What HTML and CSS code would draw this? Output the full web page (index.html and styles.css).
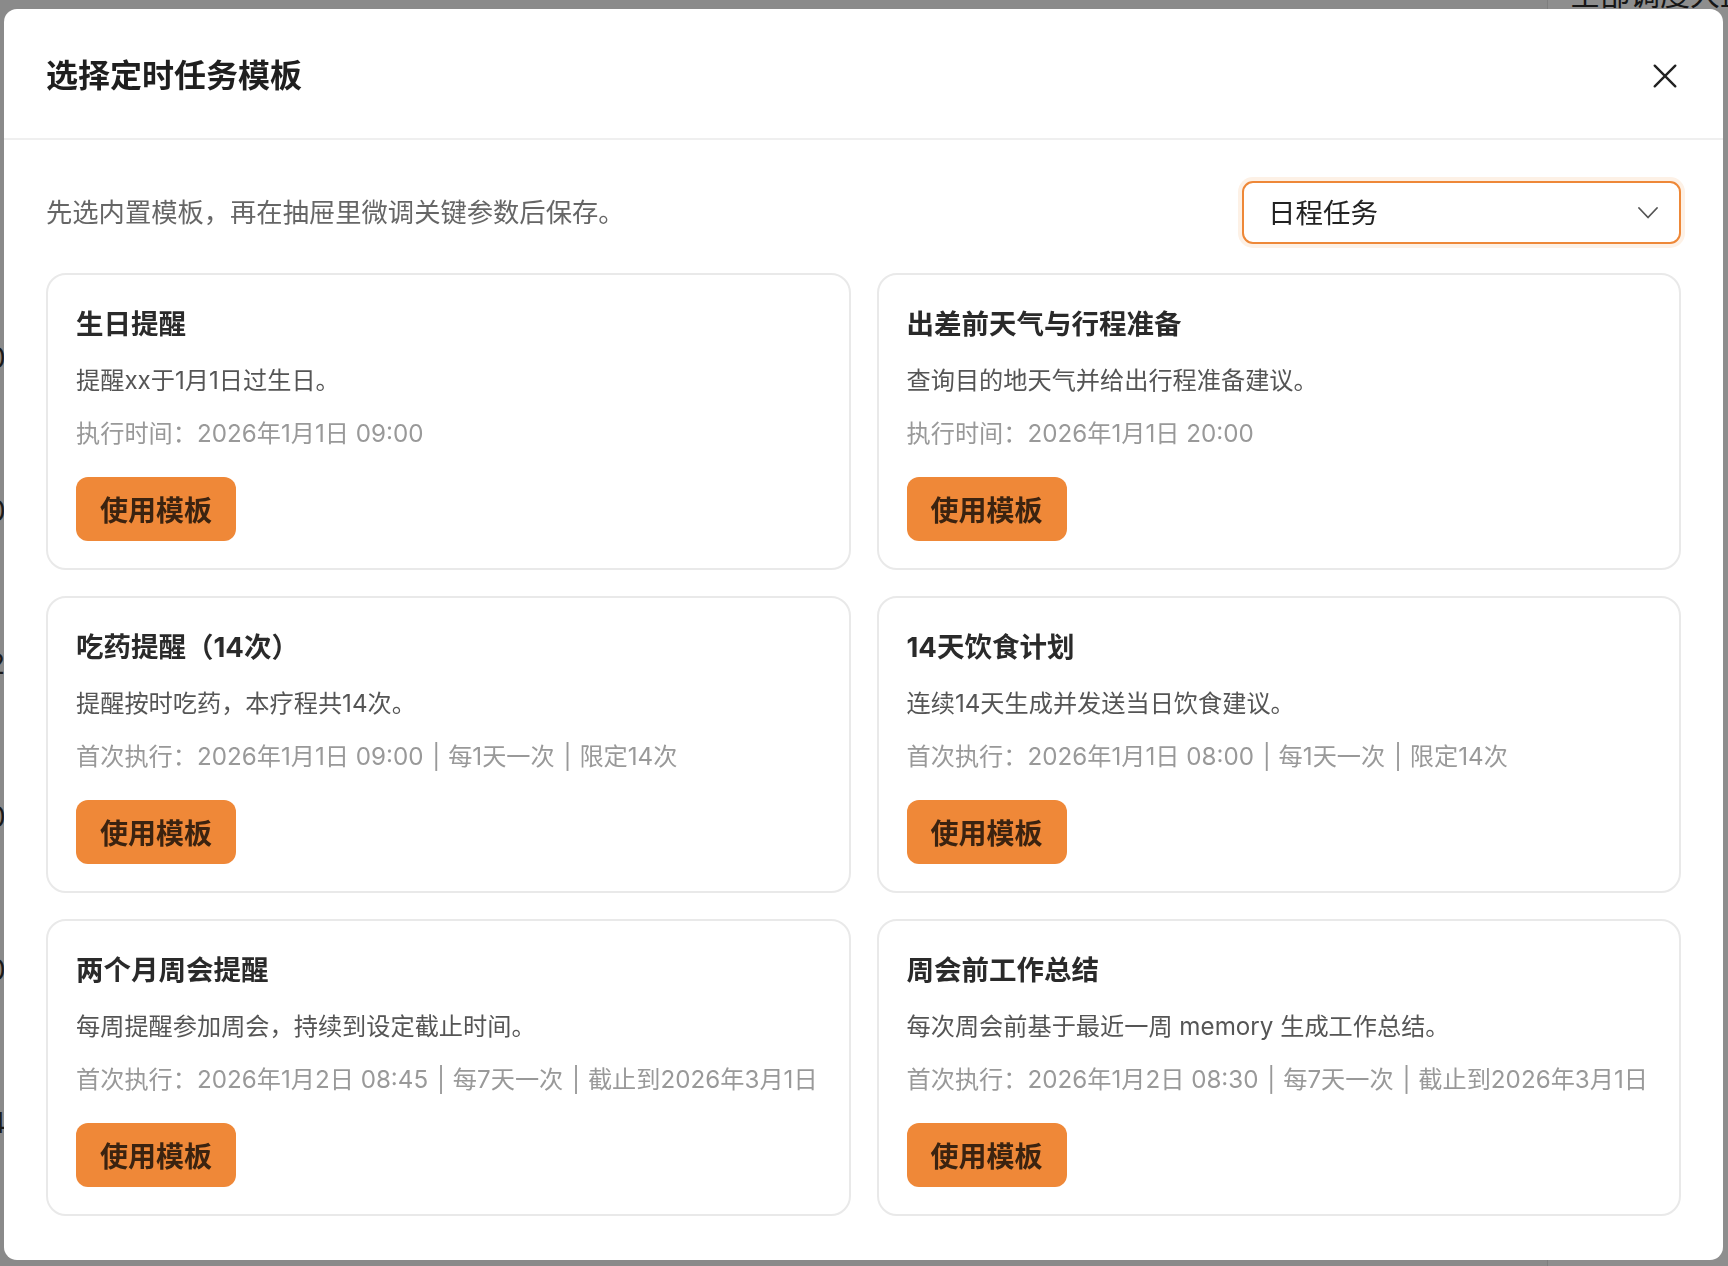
FILE: index.html
```html
<!DOCTYPE html>
<html lang="zh-CN">
<head>
<meta charset="utf-8">
<title>选择定时任务模板</title>
<link rel="stylesheet" href="styles.css">
</head>
<body>
<div class="page">
  <div class="page-main">
    <div class="bg-row">0</div>
    <div class="bg-row">0</div>
    <div class="bg-row">2</div>
    <div class="bg-row">0</div>
    <div class="bg-row">0</div>
    <div class="bg-row">4</div>
  </div>
  <div class="page-side"><div class="side-title">全部调度大盘</div></div>
</div>

<div class="overlay">
  <div class="modal" role="dialog" aria-labelledby="modal-title">
    <header class="modal-header">
      <h2 class="modal-title" id="modal-title">选择定时任务模板</h2>
      <button class="close-btn" type="button" aria-label="关闭">
        <svg viewBox="0 0 24 24" width="26" height="26"><path d="M2.5 2.5 L21.5 21.5 M21.5 2.5 L2.5 21.5" fill="none" stroke="#222" stroke-width="2.2" stroke-linecap="round"/></svg>
      </button>
    </header>

    <div class="modal-body">
      <div class="toolbar">
        <p class="hint">先选内置模板，再在抽屉里微调关键参数后保存。</p>
        <div class="select">
          <span class="select-value">日程任务</span>
          <svg class="chevron" viewBox="0 0 20 12" width="20" height="12"><path d="M1 1 L10 10.5 L19 1" fill="none" stroke="#555" stroke-width="1.8" stroke-linecap="round" stroke-linejoin="round"/></svg>
        </div>
      </div>

      <div class="grid">
        <div class="card">
          <h3 class="card-title">生日提醒</h3>
          <p class="card-desc">提醒xx于1月1日过生日。</p>
          <p class="card-meta">执行时间：2026年1月1日 09:00</p>
          <button class="use-btn" type="button">使用模板</button>
        </div>
        <div class="card">
          <h3 class="card-title">出差前天气与行程准备</h3>
          <p class="card-desc">查询目的地天气并给出行程准备建议。</p>
          <p class="card-meta">执行时间：2026年1月1日 20:00</p>
          <button class="use-btn" type="button">使用模板</button>
        </div>
        <div class="card">
          <h3 class="card-title">吃药提醒（14次）</h3>
          <p class="card-desc">提醒按时吃药，本疗程共14次。</p>
          <p class="card-meta">首次执行：2026年1月1日 09:00 <span class="sep">|</span> 每1天一次 <span class="sep">|</span> 限定14次</p>
          <button class="use-btn" type="button">使用模板</button>
        </div>
        <div class="card">
          <h3 class="card-title">14天饮食计划</h3>
          <p class="card-desc">连续14天生成并发送当日饮食建议。</p>
          <p class="card-meta">首次执行：2026年1月1日 08:00 <span class="sep">|</span> 每1天一次 <span class="sep">|</span> 限定14次</p>
          <button class="use-btn" type="button">使用模板</button>
        </div>
        <div class="card">
          <h3 class="card-title">两个月周会提醒</h3>
          <p class="card-desc">每周提醒参加周会，持续到设定截止时间。</p>
          <p class="card-meta">首次执行：2026年1月2日 08:45 <span class="sep">|</span> 每7天一次 <span class="sep">|</span> 截止到2026年3月1日</p>
          <button class="use-btn" type="button">使用模板</button>
        </div>
        <div class="card">
          <h3 class="card-title">周会前工作总结</h3>
          <p class="card-desc">每次周会前基于最近一周 memory 生成工作总结。</p>
          <p class="card-meta">首次执行：2026年1月2日 08:30 <span class="sep">|</span> 每7天一次 <span class="sep">|</span> 截止到2026年3月1日</p>
          <button class="use-btn" type="button">使用模板</button>
        </div>
      </div>
    </div>
  </div>
</div>
</body>
</html>
```

FILE: styles.css
```css
* {
  box-sizing: border-box;
}

html, body {
  margin: 0;
  padding: 0;
  height: 100%;
}

body {
  font-family: "Inter", "Noto Sans CJK SC", sans-serif;
  background: #8a8a8a;
  overflow: hidden;
}

/* underlying page (dimmed by the overlay) */
.page {
  display: flex;
  height: 100%;
}

.page-main {
  width: 1547px;
  flex: none;
  display: flex;
  flex-direction: column;
  padding-top: 338px;
}

.bg-row {
  height: 153px;
  margin-left: -12px;
  font-size: 28px;
  line-height: 40px;
  color: #1a1a1a;
}

.page-side {
  flex: 1;
  background: #8e8e8e;
  border-left: 1px solid #7e7e7e;
  overflow: hidden;
}

.side-title {
  margin: -26px 0 0 22px;
  font-family: "Noto Sans CJK SC", sans-serif;
  font-size: 30px;
  line-height: 36px;
  color: #161616;
  white-space: nowrap;
}

/* dialog overlay */
.overlay {
  position: fixed;
  inset: 0;
  display: flex;
  padding: 9px 5px 6px 4px;
}

.modal {
  flex: 1;
  display: flex;
  flex-direction: column;
  background: #ffffff;
  border-radius: 13px;
  overflow: hidden;
}

.modal-header {
  height: 131px;
  flex: none;
  display: flex;
  align-items: center;
  justify-content: space-between;
  padding: 4px 42px 0 42px;
  border-bottom: 2px solid #efefef;
}

.modal-title {
  margin: 0;
  font-size: 32px;
  line-height: 44px;
  font-weight: 700;
  color: #1f1f1f;
}

.close-btn {
  width: 32px;
  height: 32px;
  padding: 0;
  border: 0;
  background: none;
  display: flex;
  align-items: center;
  justify-content: center;
  cursor: pointer;
}

.modal-body {
  flex: 1;
  padding: 41px 42px 44px 42px;
}

.toolbar {
  display: flex;
  align-items: center;
  justify-content: space-between;
  margin-bottom: 29px;
}

.hint {
  margin: 0;
  font-size: 26.3px;
  line-height: 36px;
  color: #666666;
}

.select {
  width: 439px;
  height: 63px;
  display: flex;
  align-items: center;
  justify-content: space-between;
  padding: 0 21px 0 24px;
  border: 2px solid #ee8838;
  border-radius: 11px;
  box-shadow: 0 0 0 4px #fdf1e6;
  background: #fff;
}

.select-value {
  font-size: 27.5px;
  line-height: 36px;
  color: #222222;
}

.chevron {
  display: block;
}

.grid {
  display: grid;
  grid-template-columns: 1fr 1fr;
  grid-auto-rows: 297px;
  gap: 26px;
}

.card {
  border: 2px solid #e9e9e9;
  border-radius: 20px;
  padding: 29px 28px 27px 28px;
  display: flex;
  flex-direction: column;
  align-items: flex-start;
  background: #fff;
}

.card-title {
  margin: 0;
  font-size: 27.5px;
  line-height: 40px;
  font-weight: 700;
  color: #2a2a2a;
}

.card-desc {
  margin: 19px 0 0 0;
  font-size: 24.2px;
  line-height: 36px;
  color: #555555;
  white-space: nowrap;
}

.card-meta {
  margin: 17px 0 0 0;
  font-size: 24.2px;
  line-height: 36px;
  color: #999999;
  white-space: nowrap;
}

.sep {
  margin: 0 1px 0 2px;
}

.use-btn {
  margin-top: 25px;
  width: 160px;
  height: 64px;
  border: 0;
  border-radius: 12px;
  background: #ef8838;
  color: #3b2310;
  font-family: "Noto Sans CJK SC", sans-serif;
  font-size: 28px;
  font-weight: 700;
  line-height: 40px;
  padding: 0;
  cursor: pointer;
}
```
